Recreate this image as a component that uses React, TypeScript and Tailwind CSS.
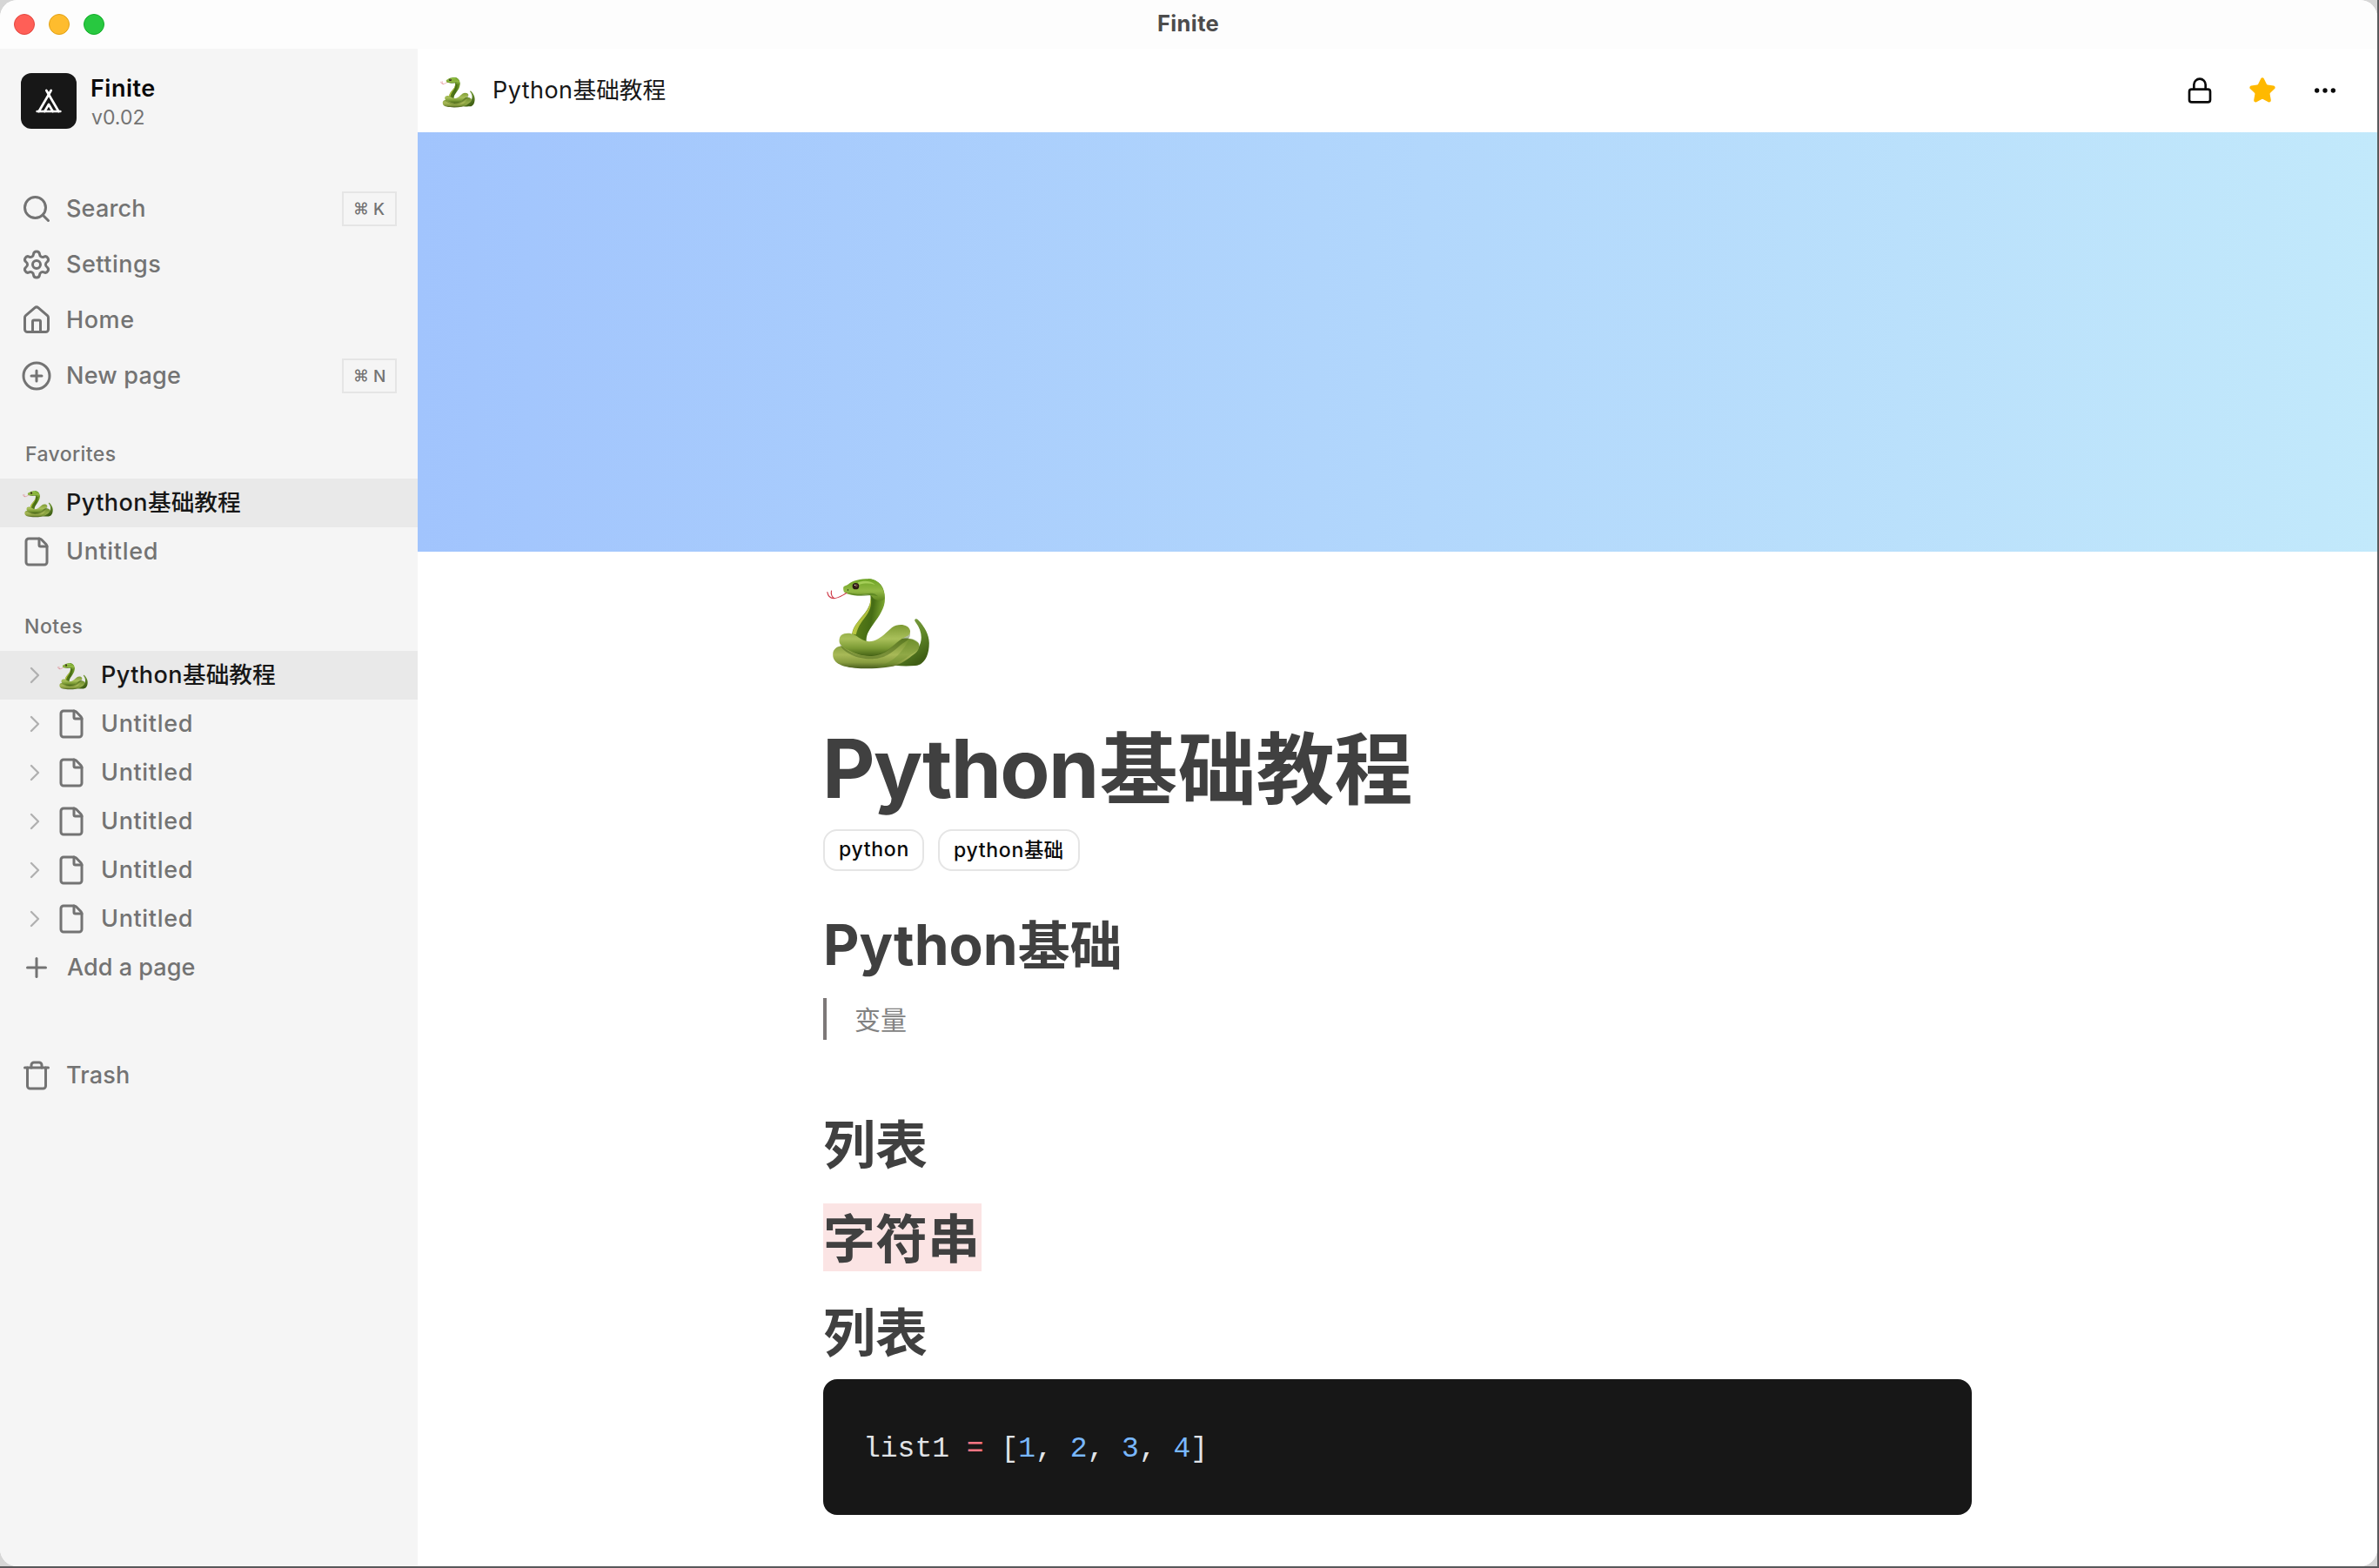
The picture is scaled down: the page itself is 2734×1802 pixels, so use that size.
import React from "react";
import {
  ChevronRight,
  CirclePlus,
  Ellipsis,
  File,
  House,
  Lock,
  Plus,
  Search,
  Settings,
  Star,
  Tent,
  Trash,
} from "lucide-react";

const CJK = "font-['Noto_Sans_CJK_SC',sans-serif]";

function Snake({ className }: { className: string }) {
  return (
    <svg className={className} viewBox="60 103 360 316" fill="none">
      <defs>
        <linearGradient id="neck" x1="0" y1="0" x2="1" y2="0.25">
          <stop offset="0" stopColor="#c3cf45" />
          <stop offset="0.35" stopColor="#567a18" />
          <stop offset="0.7" stopColor="#456c14" />
          <stop offset="1" stopColor="#79a32f" />
        </linearGradient>
        <linearGradient id="head" x1="0" y1="0" x2="0" y2="1">
          <stop offset="0" stopColor="#6da324" />
          <stop offset="0.55" stopColor="#93b945" />
          <stop offset="1" stopColor="#5f871f" />
        </linearGradient>
        <linearGradient id="coilTop" x1="0" y1="0" x2="0" y2="1">
          <stop offset="0" stopColor="#7d9a33" />
          <stop offset="0.45" stopColor="#a9c05a" />
          <stop offset="0.75" stopColor="#7b9a34" />
          <stop offset="1" stopColor="#466316" />
        </linearGradient>
        <linearGradient id="coilLow" x1="0" y1="0" x2="0" y2="1">
          <stop offset="0" stopColor="#71902e" />
          <stop offset="0.55" stopColor="#a8b957" />
          <stop offset="0.8" stopColor="#879c3f" />
          <stop offset="1" stopColor="#475c1c" />
        </linearGradient>
        <linearGradient id="tail" x1="0" y1="0" x2="0.5" y2="1">
          <stop offset="0" stopColor="#84a34c" />
          <stop offset="0.55" stopColor="#628a2a" />
          <stop offset="1" stopColor="#3f5e14" />
        </linearGradient>
      </defs>
      <path
        d="M367 247c0-6 8-6 12-1 22 22 38 52 38 80 0 42-16 76-48 78-24 2-48 2-70-1l10-40c30-4 60-8 70-20 18-28 12-62-8-88-2-3-4-5-4-8z"
        fill="url(#tail)"
      />
      <path
        d="M84 366c0-20 16-32 40-30l190-24c24-8 54 0 66 14 6 10 0 26-10 34-24 18-50 42-88 48-50 8-120 8-158-2-28-8-40-22-40-40z"
        fill="url(#coilLow)"
      />
      <path
        d="M350 310c22 2 36 14 33 30-3 12-24 22-44 36-30 20-60 32-110 34 60-14 90-44 121-100z"
        fill="#648a28"
        opacity="0.35"
      />
      <path
        d="M212 150c8 30-2 54-22 78-22 26-36 42-40 66-1 18 10 24 26 28h24c-2-24 8-40 24-62 22-30 40-56 40-88 0-40-18-64-58-68z"
        fill="url(#neck)"
      />
      <path
        d="M214 164c2 26-6 44-26 68-20 24-34 40-36 62l12 2c8-32 22-46 36-66 14-20 20-42 14-66z"
        fill="#d3db4c"
        opacity="0.75"
      />
      <path
        d="M106 318c0-20 14-28 36-26 24 4 40 26 62 28 36 2 58-26 84-48 22-16 58-12 63 10 3 18-12 20-26 28-30 18-48 54-100 60-34 4-68-8-88-20-18-10-31-18-31-32z"
        fill="url(#coilTop)"
      />
      <path
        d="M108 330c20 22 60 42 108 40 56-4 78-42 108-60 10-6 24-8 27-20 2 12-4 24-18 32-28 16-46 52-106 58-50 4-104-16-119-50z"
        fill="#37560f"
        opacity="0.4"
      />
      <path
        d="M120 136c0-8 10-8 18-14 16-12 38-18 72-18 30 0 52 30 53 64 0 14-20 14-38 4-8-12-14-15-30-13-26 4-52 2-68-6-6-3-7-11-7-17z"
        fill="url(#head)"
      />
      <path d="M135 151c24 6 50 7 75 3 14-3 22 2 30 10-10-2-16-4-30-3-28 4-56 4-75-10z" fill="#4b7717" opacity="0.6" />
      <path d="M170 116c22-8 46-6 60 8-18-6-36-6-56 0z" fill="#b7dc6a" opacity="0.7" />
      <ellipse cx="163" cy="129" rx="11.5" ry="11" fill="#2a1a12" />
      <ellipse cx="165" cy="127" rx="5" ry="5" fill="#6a4a3c" />
      <circle cx="160" cy="125" r="2" fill="#fff" />
      <ellipse cx="136" cy="142" rx="2" ry="3" fill="#2e4d0e" />
      <path
        d="M131 153c-16 8-26 18-44 18-12 0-20-8-22-21M88 171c-8-6-11-16-9-26"
        stroke="#cf3b4a"
        strokeWidth="3.4"
        strokeLinecap="round"
      />
    </svg>
  );
}

function Kbd({ k }: { k: string }) {
  return (
    <span className="ml-auto flex h-10 w-[63px] items-center border-2 border-[#e5e5e5] pl-[11px] text-xl leading-none">
      <span className="w-[15px] text-[18px]">⌘</span>
      <span className="ml-2 text-[19px]">{k}</span>
    </span>
  );
}

const nav = [
  { label: "Search", icon: Search, k: "K", track: "tracking-[0.18px]" },
  { label: "Settings", icon: Settings, track: "tracking-[0.5px]" },
  { label: "Home", icon: House, track: "tracking-[0.6px]" },
  { label: "New page", icon: CirclePlus, k: "N", track: "tracking-[0.22px]" },
];

function Title({ weight }: { weight: string }) {
  return (
    <span className={`flex items-baseline pb-0.5 leading-none text-[#171717] ${weight}`}>
      <span className="tracking-[0.45px]">Python</span>
      <span className={`text-[26.7px] leading-none ${CJK}`}>基础教程</span>
    </span>
  );
}

function NoteRow() {
  return (
    <div className="flex h-14 items-center pl-6">
      <ChevronRight className="size-8 shrink-0 text-[#b0b0b0]" strokeWidth={1.75} />
      <File className="ml-2 size-9 shrink-0" strokeWidth={2} />
      <span className="ml-4 tracking-[0.65px]">Untitled</span>
    </div>
  );
}

function Sidebar() {
  return (
    <aside className="flex w-[480px] shrink-0 flex-col bg-[#f5f5f5] text-[27px] leading-9 font-medium text-[#737373]">
      <div className="flex h-[120px] items-center pt-1 pl-6">
        <div className="-mt-1 flex size-16 items-center justify-center rounded-xl bg-[#171717]">
          <Tent className="size-8 text-white" strokeWidth={2} />
        </div>
        <div className="ml-4 flex flex-col">
          <span className="leading-[34px] font-semibold tracking-[0.5px] text-[#0a0a0a]">Finite</span>
          <span className="ml-px text-[23px] leading-8 font-normal">v0.02</span>
        </div>
      </div>

      <nav className="mt-8 flex flex-col">
        {nav.map(({ label, icon: Icon, k, track }) => (
          <div key={label} className="flex h-16 items-center pr-6 pl-6">
            <Icon className="size-9 shrink-0" strokeWidth={2} />
            <span className={`ml-4 ${track}`}>{label}</span>
            {k && <Kbd k={k} />}
          </div>
        ))}
      </nav>

      <div className="mt-[37px] mb-[3px] flex h-[46px] items-center pb-1 pl-[29px] text-[23px] tracking-[0.4px]">
        Favorites
      </div>
      <div className="flex h-14 items-center bg-[#e9e9e9] pl-[26px]">
        <Snake className="mt-0.5 h-[31px] w-[35px] shrink-0" />
        <span className="ml-[15px]">
          <Title weight="font-medium" />
        </span>
      </div>
      <div className="flex h-14 items-center pl-6">
        <File className="size-9 shrink-0" strokeWidth={2} />
        <span className="ml-4 tracking-[0.65px]">Untitled</span>
      </div>

      <div className="mt-[37px] mb-[3px] flex h-[46px] items-center pb-1 pl-7 text-[23px] tracking-[0.5px]">Notes</div>
      <div className="flex h-14 items-center bg-[#e9e9e9] pl-6">
        <ChevronRight className="size-8 shrink-0 text-[#b0b0b0]" strokeWidth={1.75} />
        <Snake className="mt-0.5 ml-[10px] h-[31px] w-[35px] shrink-0" />
        <span className="ml-[15px]">
          <Title weight="font-medium" />
        </span>
      </div>
      <NoteRow />
      <NoteRow />
      <NoteRow />
      <NoteRow />
      <NoteRow />
      <div className="flex h-14 items-center pl-6">
        <Plus className="size-9 shrink-0" strokeWidth={2} />
        <span className="ml-[17px] tracking-[0.05px]">Add a page</span>
      </div>
      <div className="mt-16 flex h-16 items-center pl-6">
        <Trash className="size-9 shrink-0" strokeWidth={2} />
        <span className="ml-4 tracking-[0.18px]">Trash</span>
      </div>
    </aside>
  );
}

function Tag({ className, latin, cjk }: { className: string; latin: string; cjk?: string }) {
  return (
    <span
      className={`flex h-12 items-center rounded-2xl border-2 border-[#e5e5e5] pb-0.5 pl-4 text-[23px] leading-none font-medium text-[#0a0a0a] ${className}`}
    >
      <span className="flex items-baseline">
        <span className="tracking-[0.7px]">{latin}</span>
        {cjk && <span className={`text-[22.5px] leading-none ${CJK}`}>{cjk}</span>}
      </span>
    </span>
  );
}

function Heading({ children, mark }: { children: string; mark?: boolean }) {
  return (
    <h2 className="flex">
      <span
        className={`flex h-[78px] items-center pr-0.5 pb-[5px] text-[60px] leading-none font-bold ${CJK} ${mark ? "bg-[#fbe4e4]" : ""}`}
      >
        {children}
      </span>
    </h2>
  );
}

export default function App() {
  return (
    <div className="h-[1802px] w-[2734px] overflow-hidden border-r-2 border-b-2 border-[#59595b] bg-[#d6d6d6] font-['Inter','Noto_Sans_CJK_SC',sans-serif]">
      <div className="flex h-[1800px] w-[2732px] flex-col overflow-hidden rounded-[20px] bg-white">
        <header className="flex h-14 shrink-0 items-center bg-[#fdfdfd]">
          <div className="flex w-[1330px] gap-4 pl-4">
            <span className="size-6 rounded-full border border-[#e2463f] bg-[#ff5f57]" />
            <span className="size-6 rounded-full border border-[#e1a116] bg-[#febc2e]" />
            <span className="size-6 rounded-full border border-[#12ac28] bg-[#28c840]" />
          </div>
          <span className="pb-0.5 text-[25.5px] leading-[52px] font-bold tracking-[0.37px] text-[#4c4c4c]">
            Finite
          </span>
        </header>

        <div className="flex min-h-0 flex-1">
          <Sidebar />
          <main className="flex min-w-0 flex-1 flex-col bg-white">
            <div className="flex h-24 shrink-0 items-center pr-11 pl-[26px] text-[27px]">
              <Snake className="mt-1 h-[35px] w-10" />
              <span className="ml-5">
                <Title weight="font-normal" />
              </span>
              <div className="ml-auto flex items-center gap-10 text-[#0a0a0a]">
                <Lock className="size-8" strokeWidth={2} />
                <Star className="size-8 fill-[#ffb900] text-[#ffb900]" strokeWidth={2} />
                <Ellipsis className="size-8" strokeWidth={2} />
              </div>
            </div>
            <div className="h-[482px] shrink-0 bg-[linear-gradient(to_right,#a1c4fd,#c2e9fb)]" />

            <article className="mx-auto flex w-[1320px] flex-col pt-[31px] text-[#404040]">
              <Snake className="ml-[3px] h-[105px] w-[120px]" />
              <h1 className="mt-[57px] -ml-px flex h-28 items-baseline text-[93.5px] leading-[112px] font-bold">
                <span className="tracking-[-1.7px]">Python</span>
                <span className={`ml-0.5 text-[90px] leading-none ${CJK}`}>基础教程</span>
              </h1>
              <div className="mt-[14px] flex gap-4">
                <Tag className="w-[116px]" latin="python" />
                <Tag className="w-[163px]" latin="python" cjk="基础" />
              </div>
              <h2 className="mt-[45px] flex h-20 items-baseline text-[64px] leading-[80px] font-bold">
                <span>Python</span>
                <span className={`text-[60px] leading-none ${CJK}`}>基础</span>
              </h2>
              <blockquote
                className={`mt-[21px] flex h-12 items-center border-l-4 border-[#7d7878] pb-[3px] pl-8 text-[30px] leading-none text-[#828282] ${CJK}`}
              >
                变量
              </blockquote>
              <div className="mt-20 flex flex-col gap-[30px]">
                <Heading>列表</Heading>
                <Heading mark>字符串</Heading>
                <Heading>列表</Heading>
              </div>
              <pre className="mt-4 flex h-[156px] items-center rounded-2xl bg-[#171717] pt-1 pl-[46px] font-['Liberation_Mono',monospace] text-[33px] leading-none text-[#e1e4e8]">
                <code className="font-['Liberation_Mono',monospace]">
                  list1 <span className="text-[#f97583]">=</span> [<span className="text-[#79b8ff]">1</span>,{" "}
                  <span className="text-[#79b8ff]">2</span>, <span className="text-[#79b8ff]">3</span>,{" "}
                  <span className="text-[#79b8ff]">4</span>]
                </code>
              </pre>
            </article>
          </main>
        </div>
      </div>
    </div>
  );
}
